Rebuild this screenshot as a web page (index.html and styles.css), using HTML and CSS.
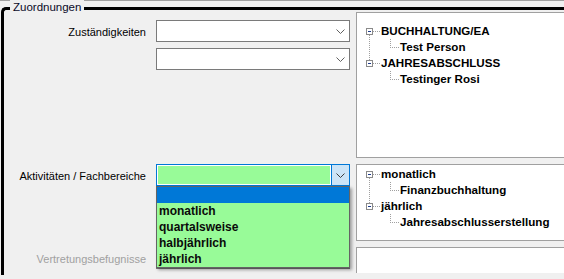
FILE: index.html
```html
<!DOCTYPE html>
<html lang="de">
<head>
    <meta charset="UTF-8">
    <title>Zuordnungen</title>
    <link rel="stylesheet" href="styles.css">
</head>
<body>

<div class="topline"></div>

<div class="group">
    <span class="legend">Zuordnungen</span>

    <div class="section s1">
        <div class="fields">
            <div class="row">
                <label>Zuständigkeiten</label>
                <div class="combo">
                    <div class="combo-text"></div>
                    <div class="combo-btn"><svg width="9" height="5" viewBox="0 0 9 5"><polyline points="0.5,0.5 4.5,4.5 8.5,0.5" fill="none" stroke="#606060" stroke-width="1"/></svg></div>
                </div>
            </div>
            <div class="row">
                <label></label>
                <div class="combo">
                    <div class="combo-text"></div>
                    <div class="combo-btn"><svg width="9" height="5" viewBox="0 0 9 5"><polyline points="0.5,0.5 4.5,4.5 8.5,0.5" fill="none" stroke="#606060" stroke-width="1"/></svg></div>
                </div>
            </div>
        </div>
        <ul class="tree t1">
            <li class="root">
                <div class="node"><span class="toggle"></span>BUCHHALTUNG/EA</div>
                <ul><li class="child"><div class="node">Test Person</div></li></ul>
            </li>
            <li class="root">
                <div class="node"><span class="toggle"></span>JAHRESABSCHLUSS</div>
                <ul><li class="child"><div class="node">Testinger Rosi</div></li></ul>
            </li>
        </ul>
    </div>

    <div class="section s2">
        <div class="fields">
            <div class="row">
                <label>Aktivitäten / Fachbereiche</label>
                <div class="combo focused">
                    <div class="combo-text"></div>
                    <div class="combo-btn"><svg width="9" height="5" viewBox="0 0 9 5"><polyline points="0.5,0.5 4.5,4.5 8.5,0.5" fill="none" stroke="#3c3c3c" stroke-width="1"/></svg></div>
                    <ul class="dropdown">
                        <li class="selected">&nbsp;</li>
                        <li>monatlich</li>
                        <li>quartalsweise</li>
                        <li>halbjährlich</li>
                        <li>jährlich</li>
                    </ul>
                </div>
            </div>
        </div>
        <ul class="tree t2">
            <li class="root">
                <div class="node"><span class="toggle"></span>monatlich</div>
                <ul><li class="child"><div class="node">Finanzbuchhaltung</div></li></ul>
            </li>
            <li class="root">
                <div class="node"><span class="toggle"></span>jährlich</div>
                <ul><li class="child"><div class="node">Jahresabschlusserstellung</div></li></ul>
            </li>
        </ul>
    </div>

    <div class="section s3">
        <div class="fields">
            <div class="row">
                <label class="disabled">Vertretungsbefugnisse</label>
                <div class="combo">
                    <div class="combo-text"></div>
                </div>
            </div>
        </div>
        <ul class="tree t3"></ul>
    </div>
</div>

</body>
</html>
```

FILE: styles.css
```css
html, body {
    margin: 0;
    padding: 0;
    height: 279px;
    overflow: hidden;
}
body {
    background-color: #f0f0f0;
    font-family: "Liberation Sans", Arial, sans-serif;
    font-size: 12px;
    color: #000;
}
.topline {
    height: 1px;
    background-color: #a0a0a0;
}
.group {
    position: relative;
    margin: 6px 0 0 1px;
    border-top: 3px solid #000;
    border-left: 3px solid #000;
    border-top-left-radius: 5px;
}
.legend {
    position: absolute;
    top: -10px;
    left: 6px;
    padding: 0 3px;
    line-height: 15px;
    font-size: 11.5px;
    background-color: #f0f0f0;
    color: #0a0a28;
}
.section {
    display: flex;
    align-items: flex-start;
}
.s1 {
    padding-top: 2px;
}
.s2, .s3 {
    margin-top: 6px;
}
.fields {
    width: 346px;
}
.s1 .fields {
    padding-top: 8px;
}
.row {
    display: flex;
    align-items: center;
    height: 22px;
    margin-bottom: 6px;
}
.row label {
    width: 142px;
    margin-right: 10px;
    padding-top: 2px;
    text-align: right;
    white-space: nowrap;
    font-size: 11px;
}
.row label.disabled {
    color: #a0a0a0;
}
.combo {
    position: relative;
    display: flex;
    width: 194px;
    height: 22px;
    box-sizing: border-box;
    border: 1px solid #7a7a7a;
    background-color: #fff;
}
.combo-text {
    flex: 1;
}
.combo-btn {
    width: 17px;
    display: flex;
    align-items: center;
    justify-content: center;
}
.combo.focused {
    border-color: #0078d7;
    padding: 1px 0 1px 1px;
}
.combo.focused .combo-text {
    background-color: #98fb98;
    margin-right: 1px;
}
.combo.focused .combo-btn {
    margin: -1px 0;
    border-left: 1px solid #0078d7;
    background-color: #cce4f7;
}
.dropdown {
    position: absolute;
    top: 21px;
    left: -1px;
    z-index: 5;
    width: 194px;
    box-sizing: border-box;
    margin: 0;
    padding: 0;
    list-style: none;
    border: 1px solid #646464;
    background-color: #98fb98;
    box-shadow: 2px 2px 3px rgba(0, 0, 0, 0.35);
}
.dropdown li {
    height: 16px;
    line-height: 16px;
    padding-left: 2px;
    font-weight: bold;
    color: #0a0a0a;
}
.dropdown li.selected {
    background-color: #0078d7;
}
.tree {
    flex: 1;
    min-width: 0;
    overflow: hidden;
    margin: 0 0 0 6px;
    padding: 0;
    list-style: none;
    box-sizing: border-box;
    border: 1px solid #a0a0a0;
    border-right: none;
    background-color: #fff;
}
.tree ul {
    margin: 0;
    padding: 0;
    list-style: none;
}
.t1 {
    height: 146px;
    padding-top: 10px;
}
.t2 {
    height: 77px;
    padding-top: 1px;
}
.t3 {
    height: 26px;
    border-bottom: none;
}
.tree li {
    position: relative;
}
.node {
    height: 16px;
    line-height: 16px;
    font-size: 11.6px;
    font-weight: bold;
    white-space: nowrap;
    padding-left: 24px;
    position: relative;
}
.child .node {
    padding-left: 43px;
}
.toggle {
    position: absolute;
    left: 9px;
    top: 5px;
    width: 7px;
    height: 7px;
    box-sizing: border-box;
    border: 1px solid #8a8a8a;
    background-color: #fff;
}
.toggle::before {
    content: "";
    position: absolute;
    left: 1px;
    top: 2px;
    width: 3px;
    height: 1px;
    background-color: #1c3a8c;
}
.toggle::after {
    content: "";
    position: absolute;
    left: 6px;
    top: 2px;
    width: 7px;
    border-top: 1px dotted #a0a0a0;
}
.root:not(:last-child)::after {
    content: "";
    position: absolute;
    left: 12px;
    top: 12px;
    height: 25px;
    border-left: 1px dotted #a0a0a0;
}
.child::before {
    content: "";
    position: absolute;
    left: 33px;
    top: 0;
    width: 8px;
    height: 8px;
    border-left: 1px dotted #a0a0a0;
    border-bottom: 1px dotted #a0a0a0;
}
```
